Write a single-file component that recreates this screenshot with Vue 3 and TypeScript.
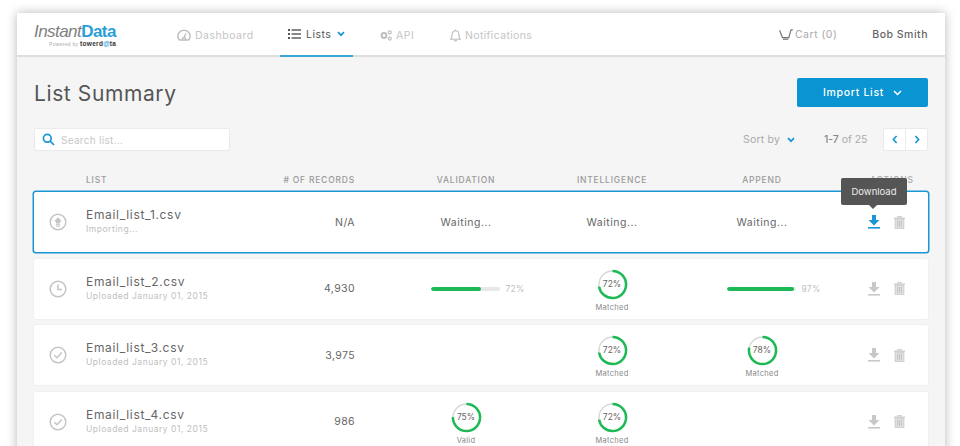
<script setup lang="ts">
interface Metric { kind: 'wait' | 'bar' | 'ring' | 'none'; value?: number; label?: string }
interface Row { name: string; sub: string; status: 'up' | 'clock' | 'check'; records: string; cells: Metric[]; active?: boolean }

const rows: Row[] = [
  { name: 'Email_list_1.csv', sub: 'Importing...', status: 'up', records: 'N/A', active: true,
    cells: [{ kind: 'wait' }, { kind: 'wait' }, { kind: 'wait' }] },
  { name: 'Email_list_2.csv', sub: 'Uploaded January 01, 2015', status: 'clock', records: '4,930',
    cells: [{ kind: 'bar', value: 72 }, { kind: 'ring', value: 72, label: 'Matched' }, { kind: 'bar', value: 97 }] },
  { name: 'Email_list_3.csv', sub: 'Uploaded January 01, 2015', status: 'check', records: '3,975',
    cells: [{ kind: 'none' }, { kind: 'ring', value: 72, label: 'Matched' }, { kind: 'ring', value: 78, label: 'Matched' }] },
  { name: 'Email_list_4.csv', sub: 'Uploaded January 01, 2015', status: 'check', records: '986',
    cells: [{ kind: 'ring', value: 75, label: 'Valid' }, { kind: 'ring', value: 72, label: 'Matched' }, { kind: 'none' }] },
]
const circ = 2 * Math.PI * 14
const dash = (v: number) => `${(circ * v) / 100} ${circ}`
</script>

<template>
  <div class="page">
    <div class="window">
      <header class="topbar">
        <div class="logo">
          <div class="logo-main"><span class="instant">Instant</span><span class="data">Data</span></div>
          <div class="logo-sub">Powered by <b>towerd<i>@</i>ta</b></div>
        </div>
        <nav class="nav">
          <a class="nav-item dash">
            <svg width="14" height="12" viewBox="0 0 14 12" fill="none" stroke="#bdbdbd" stroke-width="1.4"><path d="M2.5 11H11.5C12.6 10 13.2 8.7 13.2 7.3A6.2 6.2 0 0 0 .8 7.3C.8 8.7 1.4 10 2.5 11Z"/><path d="M5.6 10.5a1.5 1.5 0 1 1 2.8 0M7.2 8L9 4.5"/></svg>
            Dashboard
          </a>
          <a class="nav-item current">
            <svg width="13" height="10" viewBox="0 0 13 10" fill="#555"><rect x="0" y="0" width="2" height="2"/><rect x="0" y="4" width="2" height="2"/><rect x="0" y="8" width="2" height="2"/><rect x="3.5" y=".3" width="9.5" height="1.4"/><rect x="3.5" y="4.3" width="9.5" height="1.4"/><rect x="3.5" y="8.3" width="9.5" height="1.4"/></svg>
            Lists
            <svg class="chev" width="8" height="6" viewBox="0 0 8 6" fill="none" stroke="#1a96d4" stroke-width="1.7"><path d="M1 1.2L4 4.2L7 1.2"/></svg>
          </a>
          <a class="nav-item api">
            <svg width="12" height="11" viewBox="0 0 12 11" fill="none" stroke="#bdbdbd"><circle cx="4" cy="5.5" r="2.4" stroke-width="2"/><circle cx="9.8" cy="2.4" r="1.5" stroke-width="1.1"/><circle cx="9.8" cy="8.6" r="1.5" stroke-width="1.1"/></svg>
            API
          </a>
          <a class="nav-item bell">
            <svg width="11" height="13" viewBox="0 0 11 13" fill="none" stroke="#bdbdbd" stroke-width="1.1"><path d="M.8 10.2C2 9 2.1 7.5 2.1 5.6C2.1 3.4 3.5 1.8 5.5 1.8S8.9 3.4 8.9 5.6C8.9 7.5 9 9 10.2 10.2Z"/><path d="M5.5 .4V1.8M4.2 11A1.4 1.4 0 0 0 6.8 11"/></svg>
            Notifications
          </a>
        </nav>
        <div class="top-right">
          <a class="cart">
            <svg width="14" height="11" viewBox="0 0 14 11" fill="none" stroke="#777" stroke-width="1.2"><path d="M.5 1.2L3.5 8.6H9.8L12 .8H13.8"/><path d="M4 10.2H9.4"/></svg>
            Cart (0)
          </a>
          <span class="user">Bob Smith</span>
        </div>
      </header>

      <main class="main">
        <div class="title-row">
          <h1 class="title">List Summary</h1>
          <button class="import">Import List
            <svg width="9" height="6" viewBox="0 0 9 6" fill="none" stroke="#fff" stroke-width="1.5"><path d="M1 1L4.5 4.5L8 1"/></svg>
          </button>
        </div>

        <div class="toolbar">
          <label class="search">
            <svg width="13" height="13" viewBox="0 0 13 13" fill="none" stroke="#1a96d4" stroke-width="1.7"><circle cx="5.3" cy="5.3" r="3.9"/><path d="M8.2 8.2L12 12"/></svg>
            <span>Search list...</span>
          </label>
          <div class="tools">
            <span class="sort">Sort by
              <svg width="8" height="6" viewBox="0 0 8 6" fill="none" stroke="#1a96d4" stroke-width="1.7"><path d="M1 1.2L4 4.2L7 1.2"/></svg>
            </span>
            <span class="count"><b>1-7</b> of 25</span>
            <div class="pager">
              <button><svg width="6" height="9" viewBox="0 0 6 9" fill="none" stroke="#1a96d4" stroke-width="1.7"><path d="M4.6 1L1.4 4.5L4.6 8"/></svg></button>
              <button><svg width="6" height="9" viewBox="0 0 6 9" fill="none" stroke="#1a96d4" stroke-width="1.7"><path d="M1.4 1L4.6 4.5L1.4 8"/></svg></button>
            </div>
          </div>
        </div>

        <div class="cols heads">
          <span></span>
          <span>LIST</span>
          <span class="rec"># OF RECORDS</span>
          <span class="mid">VALIDATION</span>
          <span class="mid">INTELLIGENCE</span>
          <span class="mid">APPEND</span>
          <span class="acts-head">ACTIONS</span>
        </div>

        <div class="rows">
          <div v-for="r in rows" :key="r.name" class="cols row" :class="{ active: r.active }">
            <div class="status">
              <svg width="18" height="18" viewBox="0 0 18 18" fill="none" stroke="#c4c4c4" stroke-width="1.5">
                <circle cx="9" cy="9" r="7.8"/>
                <template v-if="r.status === 'up'">
                  <path d="M9 4.2L13 8.4H11V10.4H7V8.4H5Z" fill="#c4c4c4" stroke="none"/>
                  <path d="M7 11.7H11M7 13.2H11" stroke-width="1"/>
                </template>
                <path v-else-if="r.status === 'clock'" d="M9 4.4V9.4H13"/>
                <path v-else d="M5.3 9.3L8 11.8L12.8 6.4"/>
              </svg>
            </div>
            <div class="info">
              <div class="name">{{ r.name }}</div>
              <div class="sub">{{ r.sub }}</div>
            </div>
            <div class="rec records">{{ r.records }}</div>
            <div v-for="(c, i) in r.cells" :key="i" class="mid cell">
              <span v-if="c.kind === 'wait'" class="waiting">Waiting...</span>
              <div v-else-if="c.kind === 'bar'" class="bar-wrap">
                <div class="bar"><div class="fill" :style="{ width: c.value + '%' }"></div></div>
                <span class="pct">{{ c.value }}%</span>
              </div>
              <div v-else-if="c.kind === 'ring'" class="ring-wrap">
                <div class="ring">
                  <svg width="31" height="31" viewBox="0 0 32 32" fill="none">
                    <circle cx="16" cy="16" r="14" stroke="#d8d8d8" stroke-width="1.5"/>
                    <circle cx="16" cy="16" r="14" stroke="#1db954" stroke-width="2.6" :stroke-dasharray="dash(c.value ?? 0)" transform="rotate(-90 16 16)"/>
                  </svg>
                  <span class="ring-val">{{ c.value }}%</span>
                </div>
                <span class="ring-label">{{ c.label }}</span>
              </div>
            </div>
            <div class="acts">
              <div v-if="r.active" class="tooltip">Download</div>
              <svg width="12" height="14" viewBox="0 0 12 14" :fill="r.active ? '#1a96d4' : '#c8c8c8'"><path d="M4 0H8V5H11.5L6 10.5L.5 5H4Z"/><rect x="0" y="12" width="12" height="1.6"/></svg>
              <svg width="11" height="13" viewBox="0 0 11 13" fill="none" stroke="#cfcfcf" stroke-width="1.1"><path d="M0 2.2H11" stroke-width="1.4"/><path d="M3.8 2V.6H7.2V2"/><rect x="1.2" y="3.2" width="8.6" height="9.2" fill="#e2e2e2"/><path d="M3.6 4.8V10.8M5.5 4.8V10.8M7.4 4.8V10.8" stroke="#c4c4c4"/></svg>
            </div>
          </div>
        </div>
      </main>
    </div>
  </div>
</template>

<style>
html, body { margin: 0; background: #fff; overflow: hidden; height: 446px; }
</style>

<style scoped>
.page {
  height: 446px; overflow: hidden; box-sizing: border-box; padding: 13px 15px 0 17px;
  font-family: Inter, "Open Sans", "Liberation Sans", sans-serif; color: #555;
}
.window { background: #f5f5f5; box-shadow: 0 0 10px rgba(0, 0, 0, .28); min-height: 460px; }
.topbar {
  height: 42px; background: #fff; border-bottom: 2px solid #dedede; display: flex; align-items: center;
  padding: 0 17px 0 17px; position: relative;
}
.logo { width: 141px; flex: none; position: relative; top: 1px; }
.logo-main { font-family: "Liberation Sans", sans-serif; font-size: 17px; line-height: 17px; letter-spacing: -.55px; white-space: nowrap; }
.instant { font-style: italic; color: #808080; font-weight: 400; }
.data { color: #2a9fd6; font-weight: 700; }
.logo-sub { font-family: "Liberation Sans", sans-serif; font-size: 5px; line-height: 7px; color: #aaa; padding-left: 15px; letter-spacing: .3px; white-space: nowrap; }
.logo-sub b { color: #333; font-size: 6.5px; }
.logo-sub i { color: #2a9fd6; font-style: normal; }
.nav { display: flex; height: 100%; align-self: stretch; }
.nav-item {
  display: flex; align-items: center; gap: 4px; font-size: 10.5px; letter-spacing: .5px; color: #c4c4c4; white-space: nowrap;
  box-sizing: border-box; height: 44px;
}
.dash { margin-left: 2px; width: 103px; }
.current { width: 73px; padding-left: 8px; color: #555; border-bottom: 2px solid #3aa3d8; gap: 5px; }
.current .chev { margin-left: 1px; }
.api { margin-left: 27px; width: 70px; }
.bell { white-space: nowrap; letter-spacing: .35px; }
.top-right { margin-left: auto; display: flex; align-items: center; gap: 35px; }
.cart { display: flex; align-items: center; gap: 2px; font-size: 10.5px; letter-spacing: .5px; color: #aaa; }
.user { font-size: 10.5px; letter-spacing: .5px; color: #666; font-weight: 500; }
.main { padding: 21px 17px 0; }
.title-row { display: flex; justify-content: space-between; align-items: center; height: 29px; }
.title { margin: 0; font-size: 21px; font-weight: 400; letter-spacing: .6px; color: #555; position: relative; top: 1px; }
.import {
  width: 131px; height: 29px; border: 0; border-radius: 2px; background: #0a94d1; color: #fff; font: inherit;
  font-size: 10.5px; font-weight: 500; letter-spacing: .7px; display: flex; align-items: center; justify-content: center; gap: 9px;
}
.toolbar { margin-top: 21px; height: 23px; display: flex; justify-content: space-between; align-items: center; }
.search {
  width: 196px; height: 23px; box-sizing: border-box; background: #fff; border: 1px solid #eaeaea; border-radius: 2px;
  display: flex; align-items: center; gap: 6px; padding-left: 7px; font-size: 10px; letter-spacing: .3px; color: #c8c8c8;
}
.tools { display: flex; align-items: center; }
.sort { font-size: 10.5px; letter-spacing: .2px; color: #aaa; display: flex; align-items: center; gap: 7px; width: 81px; }
.count { font-size: 10.5px; letter-spacing: -.05px; color: #aaa; width: 59px; }
.count b { color: #888; font-weight: 500; }
.pager { display: flex; margin-left: 0; width: 45px; height: 23px; background: #fff; border: 1px solid #eaeaea; border-radius: 2px; box-sizing: border-box; }
.pager button { flex: 1; border: 0; background: none; padding: 0; display: flex; align-items: center; justify-content: center; }
.pager button + button { border-left: 1px solid #eaeaea; }
.cols { display: grid; grid-template-columns: 52px 169px 100px 12px 198px 94px 206px 63px; align-items: center; }
.cols > .rec { text-align: right; }
.cols > .mid { grid-column: auto; text-align: center; display: flex; justify-content: center; }
.cols > .mid:nth-child(4) { grid-column: 5; }
.heads {
  height: 41px; box-sizing: border-box; padding-top: 17px; font-size: 8.5px; letter-spacing: .8px; color: #999; font-weight: 500;
}
.heads span { white-space: nowrap; }
.acts-head { margin-left: 5px; color: #aaa; }
.rows { display: flex; flex-direction: column; gap: 6.5px; }
.row { height: 60px; background: #fff; border-radius: 2px; box-shadow: 0 0 0 1px #f0f0f0; position: relative; }
.row.active { box-shadow: 0 0 0 1.5px #1a96d4; }
.status { display: flex; padding-left: 15px; }
.info { position: relative; top: -1px; }
.name { font-size: 12px; letter-spacing: .68px; color: #666; line-height: 16px; }
.sub { font-size: 8.5px; letter-spacing: .52px; color: #c0c0c0; line-height: 12px; white-space: nowrap; }
.records { font-size: 10.5px; letter-spacing: .4px; color: #666; }
.cell { height: 100%; align-items: center; }
.waiting { font-size: 10.5px; letter-spacing: .5px; color: #666; }
.bar-wrap { display: flex; align-items: center; gap: 5px; margin-left: 24px; }
.bar { width: 69px; height: 4px; background: #e8e8e8; border-radius: 2px; overflow: hidden; }
.fill { height: 100%; background: #1db954; border-radius: 2px; }
.pct { font-size: 8.5px; color: #c0c0c0; letter-spacing: .3px; }
.ring-wrap { display: flex; flex-direction: column; align-items: center; align-self: flex-start; padding-top: 10px; }
.ring { position: relative; width: 31px; height: 31px; margin-bottom: 2px; }
.ring svg { display: block; }
.ring-val { position: absolute; left: 0; right: 0; top: 0; line-height: 31px; text-align: center; font-size: 8.5px; color: #666; }
.ring-label { font-size: 7.5px; line-height: 12px; letter-spacing: .3px; color: #888; }
.acts { display: flex; align-items: center; gap: 14px; padding-left: 3px; position: relative; }
.tooltip {
  position: absolute; left: -24px; top: -37px; width: 66px; height: 27px; background: #555; border-radius: 2px; color: #eee;
  font-size: 9.5px; display: flex; align-items: center; justify-content: center; white-space: nowrap;
}
.tooltip::after {
  content: ""; position: absolute; left: 28px; bottom: -4px; border: 4px solid transparent; border-bottom: 0; border-top-color: #555;
}
</style>
